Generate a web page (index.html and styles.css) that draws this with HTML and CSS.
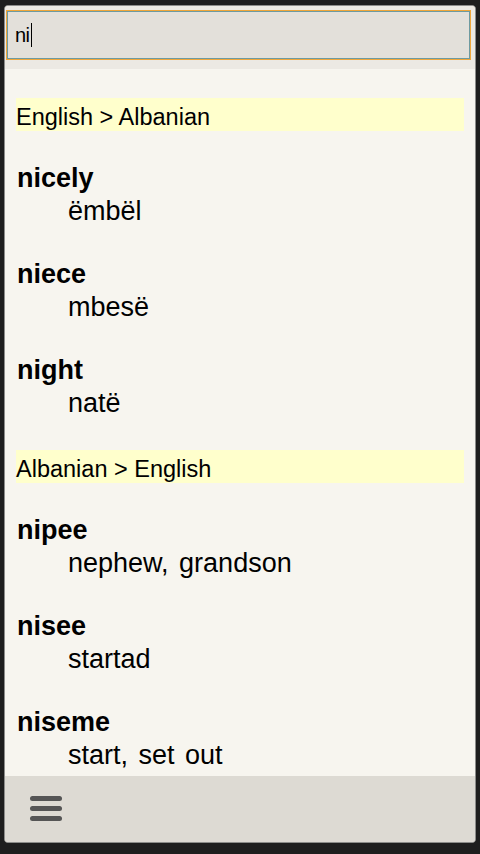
FILE: index.html
```html
<!DOCTYPE html>
<html>
<head>
<meta charset="utf-8">
<link rel="stylesheet" href="styles.css">
</head>
<body>
<div class="window">
  <div class="search-area">
    <div class="search-input"><span class="query">ni</span><span class="caret"></span></div>
  </div>
  <div class="results">
    <div class="section">English &gt; Albanian</div>
    <div class="entry"><div class="head">nicely</div><div class="trans">ëmbël</div></div>
    <div class="entry"><div class="head">niece</div><div class="trans">mbesë</div></div>
    <div class="entry"><div class="head">night</div><div class="trans">natë</div></div>
    <div class="section">Albanian &gt; English</div>
    <div class="entry"><div class="head">nipee</div><div class="trans">nephew, grandson</div></div>
    <div class="entry"><div class="head">nisee</div><div class="trans">startad</div></div>
    <div class="entry"><div class="head">niseme</div><div class="trans">start, set out</div></div>
  </div>
  <div class="bottom-bar">
    <svg class="menu-icon" width="34" height="28" viewBox="0 0 34 28">
      <rect x="1" y="1" width="32" height="5" rx="2.5" fill="#555"/>
      <rect x="1" y="11" width="32" height="5" rx="2.5" fill="#555"/>
      <rect x="1" y="21" width="32" height="5" rx="2.5" fill="#555"/>
    </svg>
  </div>
</div>
</body>
</html>
```
FILE: styles.css
```css
html, body {
  margin: 0;
  padding: 0;
  background: #1e1e1e;
  height: 854px;
  overflow: hidden;
}
body {
  font-family: "Liberation Sans", Arial, sans-serif;
  color: #000;
}
.window {
  margin: 5px 4px 0 4px;
  height: 836px;
  border: 1px solid #8c8c8a;
  border-radius: 4px;
  background: #f7f5ef;
  display: flex;
  flex-direction: column;
  overflow: hidden;
}
.search-area {
  background: #ece9e3;
  padding: 5px 5px 10px 2px;
}
.search-input {
  height: 46px;
  border: 1px solid #6e9ba0;
  box-shadow: 0 0 0 1px #f0a73a;
  background: #e3e0da;
  display: flex;
  align-items: center;
  padding-left: 7px;
  font-size: 20px;
}
.query {
  letter-spacing: -0.5px;
}
.caret {
  display: inline-block;
  width: 1px;
  height: 24px;
  background: #000;
  margin-left: 1px;
}
.results {
  flex: 1;
  padding: 29px 11px 0 11px;
  overflow: hidden;
}
.section {
  background: #ffffcc;
  height: 33px;
  line-height: 38px;
  font-size: 23.5px;
  padding-left: 0;
  margin-bottom: 31px;
}
.entry {
  margin-bottom: 30px;
}
.head {
  font-weight: bold;
  font-size: 27px;
  line-height: 33px;
  padding-left: 1px;
}
.trans {
  font-size: 27px;
  line-height: 33px;
  padding-left: 52px;
  word-spacing: 3px;
}
.bottom-bar {
  height: 66px;
  background: #dddad3;
  display: flex;
  align-items: center;
  padding-left: 24px;
  flex-shrink: 0;
}
.menu-icon {
  display: block;
}
```
